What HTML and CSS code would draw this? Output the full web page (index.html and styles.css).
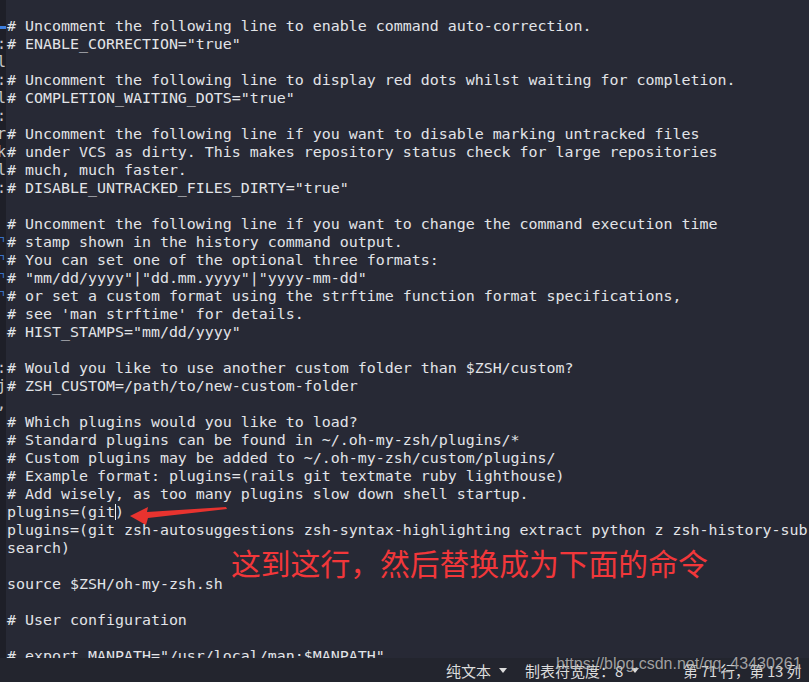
FILE: index.html
```html
<!DOCTYPE html>
<html lang="zh-CN">
<head>
  <meta charset="UTF-8" />
  <meta name="viewport" content="width=device-width, initial-scale=1.0" />
  <title>.zshrc - 文本编辑器</title>
  <link rel="stylesheet" href="styles.css">
</head>
<body>
  <div class="editor">
    <div class="gutter">
      <div class="g-row"><span class="mark-bar"></span></div>
      <div class="g-row">:</div>
      <div class="g-row">l</div>
      <div class="g-row">:</div>
      <div class="g-row">l</div>
      <div class="g-row">:</div>
      <div class="g-row">r</div>
      <div class="g-row">k</div>
      <div class="g-row">l</div>
      <div class="g-row">:</div>
      <div class="g-row"></div>
      <div class="g-row"></div>
      <div class="g-row blue">⌝</div>
      <div class="g-row blue">⌝</div>
      <div class="g-row blue">⌝</div>
      <div class="g-row blue">⌝</div>
      <div class="g-row"></div>
      <div class="g-row"></div>
      <div class="g-row"></div>
      <div class="g-row">:</div>
      <div class="g-row">j</div>
      <div class="g-row">,</div>
    </div>
    <pre class="code"># Uncomment the following line to enable command auto-correction.
# ENABLE_CORRECTION="true"

# Uncomment the following line to display red dots whilst waiting for completion.
# COMPLETION_WAITING_DOTS="true"

# Uncomment the following line if you want to disable marking untracked files
# under VCS as dirty. This makes repository status check for large repositories
# much, much faster.
# DISABLE_UNTRACKED_FILES_DIRTY="true"

# Uncomment the following line if you want to change the command execution time
# stamp shown in the history command output.
# You can set one of the optional three formats:
# "mm/dd/yyyy"|"dd.mm.yyyy"|"yyyy-mm-dd"
# or set a custom format using the strftime function format specifications,
# see 'man strftime' for details.
# HIST_STAMPS="mm/dd/yyyy"

# Would you like to use another custom folder than $ZSH/custom?
# ZSH_CUSTOM=/path/to/new-custom-folder

# Which plugins would you like to load?
# Standard plugins can be found in ~/.oh-my-zsh/plugins/*
# Custom plugins may be added to ~/.oh-my-zsh/custom/plugins/
# Example format: plugins=(rails git textmate ruby lighthouse)
# Add wisely, as too many plugins slow down shell startup.
plugins=(git<span class="cursor"></span>)
plugins=(git zsh-autosuggestions zsh-syntax-highlighting extract python z zsh-history-sub
search)

source $ZSH/oh-my-zsh.sh

# User configuration

# export MANPATH="/usr/local/man:$MANPATH"</pre>

    <svg class="arrow" width="110" height="30" viewBox="0 0 110 30">
      <polygon points="0,13 18,4 17,9 96,4 97,6 18,15 16,22" fill="#e8332f"/>
    </svg>
    <div class="note">这到这行，然后替换成为下面的命令</div>
  </div>

  <div class="statusbar">
    <span class="item">纯文本<span class="caret"></span></span>
    <span class="item">制表符宽度：8<span class="caret"></span></span>
    <span class="item pos">第 71 行，第 13 列</span>
    <div class="watermark">https://blog.csdn.net/qq_43430261</div>
  </div>
</body>
</html>
```

FILE: styles.css
```css
* {
  box-sizing: border-box;
}
html, body {
  height: 100%;
}
body {
  margin: 0;
  background: #272935;
  color: #e2e4e8;
  font-family: "DejaVu Sans Mono", monospace;
  display: flex;
  flex-direction: column;
  overflow: hidden;
}
.editor {
  position: relative;
  flex: 1;
  display: flex;
  overflow: hidden;
}
.gutter {
  width: 6px;
  background: #1e1f28;
  padding-top: 17px;
  overflow: hidden;
  font-size: 15px;
  line-height: 18px;
  color: #c8c8c8;
}
.g-row {
  height: 18px;
  text-align: right;
  white-space: nowrap;
  direction: rtl;
  position: relative;
}
.g-row.blue {
  color: #3d7fe0;
}
.mark-bar {
  display: block;
  position: absolute;
  left: 0;
  top: 9px;
  width: 6px;
  height: 3px;
  background: #3d7fe0;
}
.code {
  margin: 0;
  padding: 17px 0 0 1px;
  font-family: "DejaVu Sans Mono", monospace;
  font-size: 14.95px;
  line-height: 18px;
  white-space: pre;
  color: #e2e4e8;
}
.cursor {
  display: inline-block;
  width: 1px;
  height: 16px;
  margin-right: -1px;
  vertical-align: -3px;
  background: #f0f0f0;
}
.arrow {
  position: absolute;
  left: 130px;
  top: 503px;
}
.note {
  position: absolute;
  left: 231px;
  top: 542px;
  font-family: "Noto Sans CJK SC", sans-serif;
  font-size: 29.8px;
  line-height: 40px;
  color: #f2373a;
  white-space: nowrap;
}
.statusbar {
  position: relative;
  height: 24px;
  flex: none;
  background: #23252e;
  display: flex;
  justify-content: flex-end;
  align-items: center;
  padding-right: 8px;
  font-family: "Noto Sans CJK SC", sans-serif;
  font-size: 15px;
  color: #dcdcdc;
}
.item {
  display: flex;
  align-items: center;
  margin-left: 18px;
  white-space: nowrap;
}
.item.pos {
  margin-left: 44px;
  font-size: 14.5px;
}
.caret {
  width: 0;
  height: 0;
  margin-left: 8px;
  border-left: 4px solid transparent;
  border-right: 4px solid transparent;
  border-top: 5px solid #dcdcdc;
}
.watermark {
  position: absolute;
  left: 556px;
  top: -3px;
  font-family: "Liberation Sans", sans-serif;
  font-size: 16px;
  color: rgba(255, 255, 255, 0.6);
  text-shadow: 0 0 1px rgba(0, 0, 0, 0.5);
  white-space: nowrap;
}
```
